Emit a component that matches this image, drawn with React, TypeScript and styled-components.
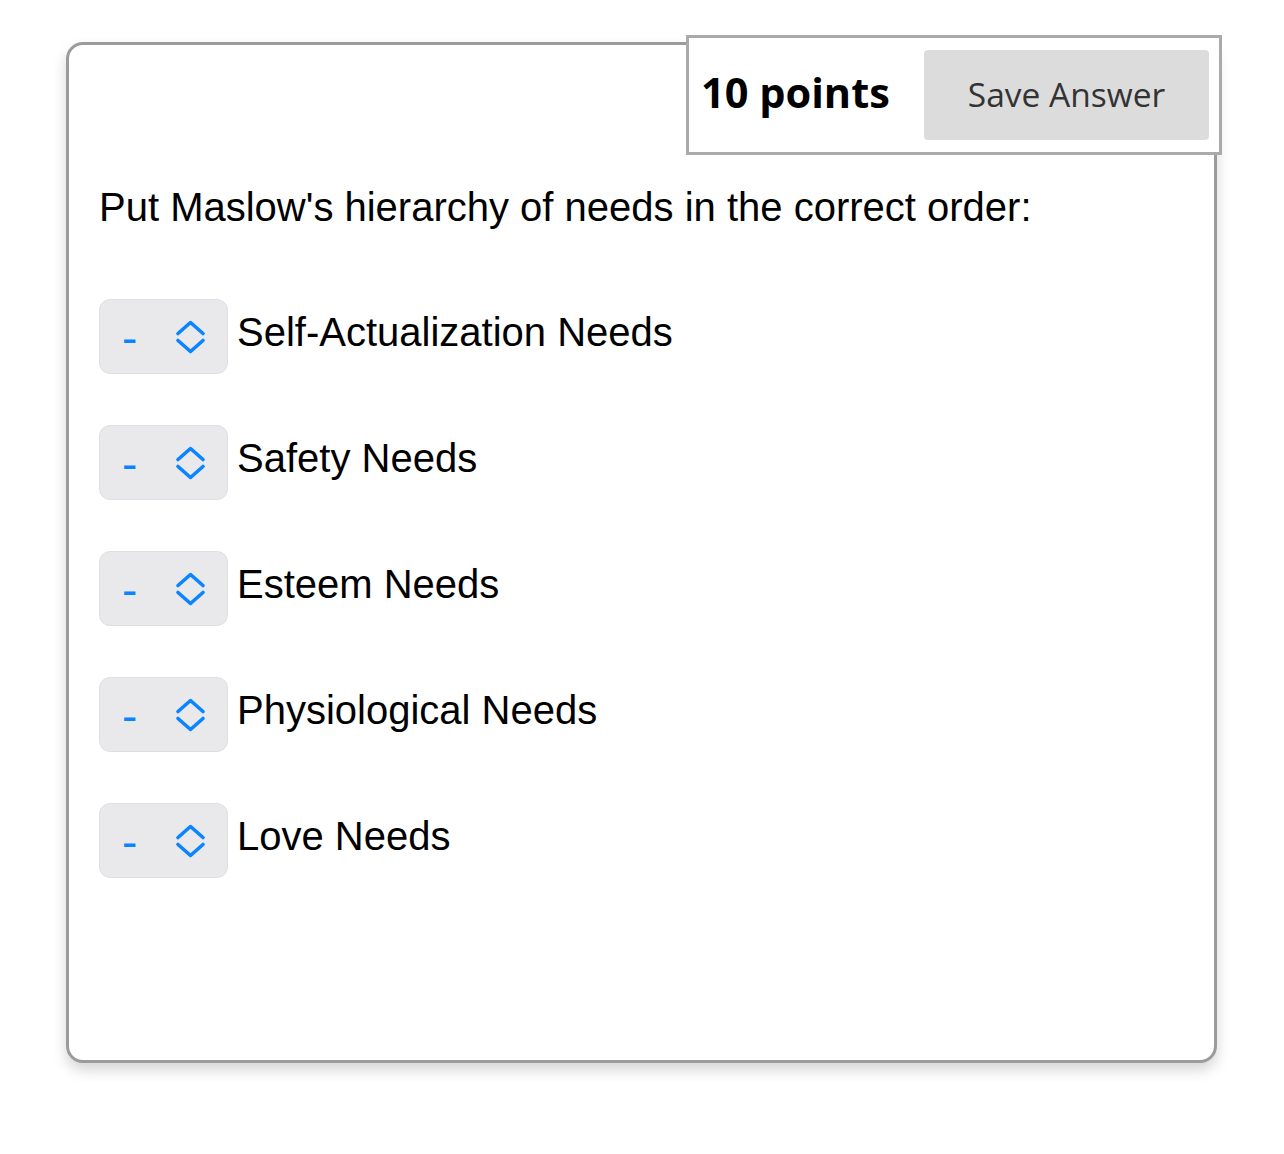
import React from 'react'
import styled, { createGlobalStyle } from 'styled-components'

const GlobalStyle = createGlobalStyle`
  html, body {
    margin: 0;
    padding: 0;
    background: #fff;
  }
  body {
    font-family: "Liberation Sans", Arial, sans-serif;
  }
`

const Page = styled.div`
  padding: 42px 0 0 66px;
  width: 1284px;
  height: 1154px;
  box-sizing: border-box;
`

const Card = styled.div`
  position: relative;
  width: 1151px;
  height: 1021px;
  box-sizing: border-box;
  border: 3px solid #9b9b9b;
  border-radius: 17px;
  background: #fff;
  box-shadow: 0 7px 14px rgba(0, 0, 0, 0.17);
  padding: 139px 30px 0 30px;
`

const PointsBox = styled.div`
  position: absolute;
  top: -10px;
  right: -8px;
  width: 536px;
  height: 120px;
  box-sizing: border-box;
  border: 3px solid #aaa;
  background: #fff;
  display: flex;
  align-items: center;
  justify-content: space-between;
  padding: 0 10px 0 12px;
`

const Points = styled.span`
  font-family: "Open Sans", "Noto Sans", sans-serif;
  font-weight: 700;
  font-size: 41.5px;
  line-height: 41.5px;
  margin-bottom: 5px;
  color: #000;
`

const SaveButton = styled.button`
  width: 285px;
  height: 90px;
  margin-bottom: 1px;
  padding: 0 0 2px 0;
  border: none;
  border-radius: 4px;
  background: #dcdcdc;
  color: #333;
  font-family: "Open Sans", "Noto Sans", sans-serif;
  font-size: 33.5px;
  cursor: pointer;
`

const Question = styled.p`
  margin: 0 0 69px 0;
  font-size: 40px;
  line-height: 46px;
  color: #000;
`

const List = styled.div`
  display: flex;
  flex-direction: column;
  gap: 51px;
`

const Row = styled.div`
  display: flex;
  align-items: center;
  gap: 9px;
`

const Select = styled.div`
  width: 129px;
  height: 75px;
  box-sizing: border-box;
  border: 1px solid #dfdfe3;
  border-radius: 11px;
  background: #e9e9eb;
  display: flex;
  align-items: center;
  padding: 0 0 0 22px;
  color: #0a84ff;
`

const Dash = styled.span`
  width: 53px;
  font-size: 46px;
  line-height: 46px;
  margin-top: 2px;
`

const Label = styled.span`
  font-size: 40px;
  line-height: 46px;
  color: #000;
  margin-top: -10px;
`

const Chevrons = () => (
  <svg width="31" height="34" viewBox="0 0 31 34" fill="none">
    <path d="M3 13.5 L15.5 2.5 L28 13.5" stroke="#0a84ff" strokeWidth="3.6" strokeLinecap="round" strokeLinejoin="round" />
    <path d="M3 20.5 L15.5 31.5 L28 20.5" stroke="#0a84ff" strokeWidth="3.6" strokeLinecap="round" strokeLinejoin="round" />
  </svg>
)

const items = [
  'Self-Actualization Needs',
  'Safety Needs',
  'Esteem Needs',
  'Physiological Needs',
  'Love Needs',
]

export default function App() {
  return (
    <>
      <GlobalStyle />
      <Page>
        <Card>
          <PointsBox>
            <Points>10 points</Points>
            <SaveButton>Save Answer</SaveButton>
          </PointsBox>
          <Question>Put Maslow's hierarchy of needs in the correct order:</Question>
          <List>
            {items.map((item) => (
              <Row key={item}>
                <Select>
                  <Dash>-</Dash>
                  <Chevrons />
                </Select>
                <Label>{item}</Label>
              </Row>
            ))}
          </List>
        </Card>
      </Page>
    </>
  )
}
